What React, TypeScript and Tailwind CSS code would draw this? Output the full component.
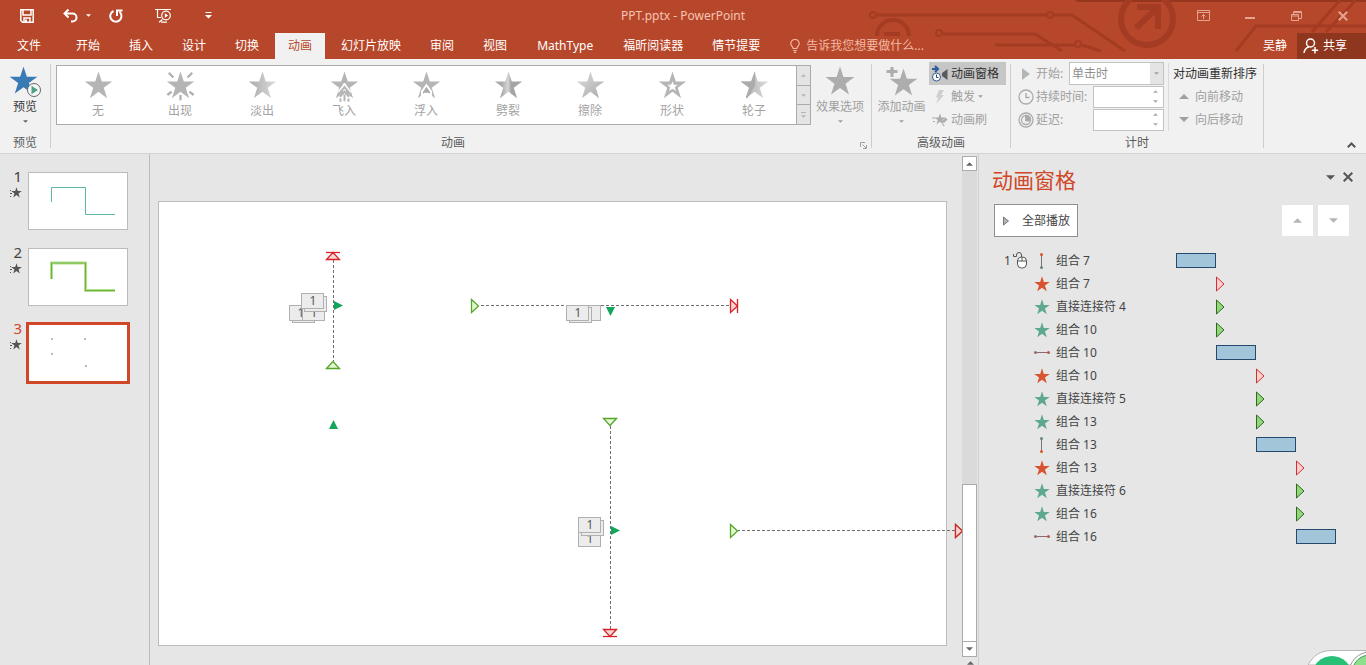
import React from "react"
import clsx from "clsx"

const STAR =
	"50,2 61.5,37 98,37 68.5,59 80,95 50,73 20,95 31.5,59 2,37 38.5,37"

const tabs = [
	"开始",
	"插入",
	"设计",
	"切换",
	"动画",
	"幻灯片放映",
	"审阅",
	"视图",
	"MathType",
	"福昕阅读器",
	"情节提要",
]

const effects = [
	{ name: "无", kind: "none" },
	{ name: "出现", kind: "appear" },
	{ name: "淡出", kind: "fade" },
	{ name: "飞入", kind: "fly" },
	{ name: "浮入", kind: "float" },
	{ name: "劈裂", kind: "split" },
	{ name: "擦除", kind: "wipe" },
	{ name: "形状", kind: "shape" },
	{ name: "轮子", kind: "wheel" },
]

type RowProps = {
	icon: "up" | "down" | "line" | "exit" | "enter"
	name: string
	start: number
}

const rows: RowProps[] = [
	{ icon: "up", name: "组合 7", start: 0 },
	{ icon: "exit", name: "组合 7", start: 40 },
	{ icon: "enter", name: "直接连接符 4", start: 40 },
	{ icon: "enter", name: "组合 10", start: 40 },
	{ icon: "line", name: "组合 10", start: 40 },
	{ icon: "exit", name: "组合 10", start: 80 },
	{ icon: "enter", name: "直接连接符 5", start: 80 },
	{ icon: "enter", name: "组合 13", start: 80 },
	{ icon: "down", name: "组合 13", start: 80 },
	{ icon: "exit", name: "组合 13", start: 120 },
	{ icon: "enter", name: "直接连接符 6", start: 120 },
	{ icon: "enter", name: "组合 16", start: 120 },
	{ icon: "line", name: "组合 16", start: 120 },
]

function Star({ className }: { className?: string }) {
	return (
		<svg viewBox="0 0 100 100" className={className} fill="currentColor">
			<polygon points={STAR} />
		</svg>
	)
}

function Caret({ up, className }: { up?: boolean; className?: string }) {
	return (
		<svg viewBox="0 0 10 5" className={className} fill="currentColor">
			<path d={up ? "M0 5L5 0L10 5Z" : "M0 0L5 5L10 0Z"} />
		</svg>
	)
}

function Separator() {
	return <div className="my-[5px] w-px shrink-0 bg-[#cdcdcd]" />
}

function Circuit() {
	return (
		<svg
			viewBox="0 0 526 59"
			className="pointer-events-none absolute right-0 top-0 h-[59px] w-[526px]"
			fill="none"
			stroke="#a33c22"
			strokeWidth="3"
		>
			<path d="M235 0H526V2H238Z" fill="#96361d" stroke="none" />
			<circle cx="33" cy="15" r="3" strokeWidth="2" />
			<path d="M37 15H206M214 15H232L285 51" />
			<circle cx="210" cy="15" r="3" strokeWidth="2" />
			<path d="M37 36A16 16 0 0 1 69 36" strokeWidth="4" />
			<path d="M44 34H60" strokeWidth="4" />
			<circle cx="99" cy="33" r="3" strokeWidth="2" />
			<path d="M103 34H195L222 51M155 45H234M242 45L261 51" />
			<circle cx="238" cy="44" r="3" strokeWidth="2" />
			<circle cx="307" cy="19" r="26" strokeWidth="6" />
			<path d="M296 28L317 8M297 7H318V29" strokeWidth="6" />
			<path d="M396 51L416 26H526M472 32L500 0M486 32L516 0" />
		</svg>
	)
}

function TitleBar() {
	return (
		<div className="relative flex h-[31px] items-center">
			<div className="flex items-center text-white">
				<button aria-label="保存" className="ml-5">
					<svg viewBox="0 0 14 14" className="size-[14px]" fill="none" stroke="currentColor" strokeWidth="1.5">
						<path d="M.8.8H13.2V13.2H2.5L.8 11.5ZM3 1V6H11V1M4 13V9H10V13" />
						<path d="M5 10.5H7V13H5Z" fill="currentColor" stroke="none" />
					</svg>
				</button>
				<button aria-label="撤消" className="ml-[29px]">
					<svg viewBox="0 0 15 14" className="h-[14px] w-[15px]" fill="none" stroke="currentColor" strokeWidth="2">
						<path d="M1.5 4.5H9.5A4 4 0 0 1 9.5 12.5H8M5.5.5L1.5 4.5L5.5 8.5" />
					</svg>
				</button>
				<button aria-label="撤消列表" className="ml-2">
					<Caret className="h-[3px] w-[5px]" />
				</button>
				<button aria-label="重复" className="ml-[18px]">
					<svg viewBox="0 0 14 14" className="size-[14px]" fill="none" stroke="currentColor" strokeWidth="2">
						<path d="M4.5 2A5.600 5.600 0 1 0 10.500 2.800M8 7V1.500H13.500" />
					</svg>
				</button>
				<button aria-label="从头开始" className="ml-8">
					<svg viewBox="0 0 17 15" className="h-[15px] w-[17px]" fill="none" stroke="currentColor" strokeWidth="1.2">
						<path d="M0 1.5H16M2.5 2V9.5H6M4 14.2L7.5 11.5M6 14.2H12" />
						<circle cx="11" cy="7.5" r="4.3" />
						<path d="M9.8 5.2L13.2 7.5L9.8 9.8Z" fill="currentColor" stroke="none" />
					</svg>
				</button>
				<button aria-label="自定义快速访问工具栏" className="ml-[33px]">
					<svg viewBox="0 0 7 7" className="size-[7px]" fill="currentColor">
						<path d="M.5 0H6.5V1H.5ZM0 3H7L3.5 6.5Z" />
					</svg>
				</button>
			</div>
			<h1 className="absolute inset-x-0 text-center text-xs text-[#f6c4b4]">
				PPT.pptx - PowerPoint
			</h1>
			<div className="ml-auto flex items-center text-[#e5a491]">
				<button aria-label="功能区显示选项" className="mr-[35px]">
					<svg viewBox="0 0 13 11" className="h-[11px] w-[13px]" fill="none" stroke="currentColor">
						<path d="M.5.5H12.5V10.5H.5ZM1 2.5H12M6.5 9V4.5M4.5 6.5L6.5 4.5L8.5 6.5" />
					</svg>
				</button>
				<button aria-label="最小化" className="mr-9">
					<svg viewBox="0 0 10 10" className="size-[10px]" fill="currentColor">
						<path d="M0 6H10V8H0Z" />
					</svg>
				</button>
				<button aria-label="还原" className="mr-9">
					<svg viewBox="0 0 11 10" className="h-[10px] w-[11px]" fill="none" stroke="currentColor">
						<path d="M.5 3.5H7.5V9.5H.5ZM1 5H7M2.5 3V.5H10.5V7.5H8M3 1.5H10" />
					</svg>
				</button>
				<button aria-label="关闭" className="mr-[18px]">
					<svg viewBox="0 0 10 10" className="size-[10px]" fill="none" stroke="currentColor" strokeWidth="2">
						<path d="M.8.8L9.2 9.2M9.2.8L.8 9.2" />
					</svg>
				</button>
			</div>
		</div>
	)
}

function TabBar() {
	return (
		<nav className="relative flex h-7 items-stretch gap-[3px] pt-0.5 text-white">
			<button className="w-[60px] shrink-0 pr-0.5 leading-6">文件</button>
			{tabs.map((tab) => (
				<button
					key={tab}
					className={clsx(
						"shrink-0 whitespace-nowrap",
						tab === "MathType" ? "px-[14px]" : "px-[13px]",
						tab === "动画" && "bg-[#f1f1f1] text-[#b7472a]"
					)}
				>
					{tab}
				</button>
			))}
			<label htmlFor="tell-me" className="ml-[14px] flex items-center">
				<svg viewBox="0 0 10 14" className="h-[14px] w-[10px] text-[#f3b9a7]" fill="none" stroke="currentColor" strokeWidth="1.2">
					<path d="M3.2 9.5C3 7.5.8 7 .8 4.6A4.2 4.2 0 0 1 9.2 4.6C9.2 7 7 7.5 6.8 9.5ZM3.2 11.5H6.8M3.8 13.3H6.2" />
				</svg>
			</label>
			<input
				id="tell-me"
				aria-label="操作说明搜索"
				className="ml-[3px] w-32 bg-transparent outline-none placeholder:text-[#f3b9a7]"
				placeholder="告诉我您想要做什么..."
			/>
			<div className="ml-auto flex">
				<button className="px-[10px]">吴静</button>
				<button className="flex items-center gap-1 bg-[#8f371e] pl-1.5 pr-[19px]">
					<svg viewBox="0 0 16 16" className="size-4" fill="none" stroke="currentColor" strokeWidth="1.5">
						<circle cx="7.5" cy="5" r="4" />
						<path d="M1 15C1.5 11.5 3.5 9.5 6 9M12 9V15.5M8.8 12.2H15.2" />
					</svg>
					共享
				</button>
			</div>
		</nav>
	)
}

function EffectIcon({ kind }: { kind: string }) {
	return (
		<svg viewBox="0 0 100 112" className="h-8 w-[29px]" fill="#b5b5b5">
			<defs>
				<linearGradient id="fade">
					<stop offset="0" stopColor="#aaa" />
					<stop offset="1" stopColor="#dcdcdc" />
				</linearGradient>
				<linearGradient id="split">
					<stop offset=".25" stopColor="#aaa" />
					<stop offset=".48" stopColor="#d6d6d6" />
					<stop offset=".6" stopColor="#a4a4a4" />
				</linearGradient>
				<linearGradient id="wipe" x1="0" y1="0" x2="1" y2="1">
					<stop offset="0" stopColor="#dedede" />
					<stop offset="1" stopColor="#a9a9a9" />
				</linearGradient>
			</defs>
			<polygon
				points={STAR}
				fill={
					kind === "fade" || kind === "wheel"
						? "url(#fade)"
						: kind === "split"
						? "url(#split)"
						: kind === "wipe"
						? "url(#wipe)"
						: undefined
				}
			/>
			{kind === "appear" && (
				<path
					d="M9 6L25 23M91 6L75 23M4 84L19 72M96 84L81 72M50 84V102"
					stroke="#b1b1b1"
					strokeWidth="8"
				/>
			)}
			{kind === "fly" && (
				<g fill="none">
					<path d="M50 44V104M30 76L50 50L70 76M28 104L50 78L72 104" stroke="#fff" strokeWidth="11" />
					<path d="M32 78L50 56L68 78M34 90L50 72L66 90M50 82V106M36 96V108M64 96V108" stroke="#b5b5b5" strokeWidth="7" />
				</g>
			)}
			{kind === "float" && (
				<path d="M50 50L66 72V90L57 80H43L34 90V72Z" fill="#ababab" stroke="#fff" strokeWidth="7" />
			)}
			{kind === "shape" && (
				<polygon points="50,36 55,48 68,48 58,57 62,70 50,62 38,70 42,57 32,48 45,48" fill="#fff" />
			)}
			{kind === "wheel" && <path d="M52 0V52L24 96L20 92L31 59L2 37H38Z" fill="#acacac" />}
		</svg>
	)
}

function Gallery() {
	return (
		<div className="mt-1.5 flex h-[60px] border border-[#ababab] bg-white">
			{effects.map((effect) => (
				<button
					key={effect.name}
					disabled
					className="flex w-[82px] flex-col items-center pt-[5px] text-[#a3a3a3]"
				>
					<EffectIcon kind={effect.kind} />
					<span className="leading-4">{effect.name}</span>
				</button>
			))}
			<div className="-my-px -mr-px ml-px flex w-[15px] flex-col divide-y divide-[#ababab] border border-[#ababab] bg-[#e4e4e4] text-[#b4b4b4]">
				<button aria-label="上一行" disabled className="flex flex-1 items-center justify-center">
					<Caret up className="h-[3px] w-[5px]" />
				</button>
				<button aria-label="下一行" disabled className="flex flex-1 items-center justify-center">
					<Caret className="h-[3px] w-[5px]" />
				</button>
				<button aria-label="其他" disabled className="flex flex-1 flex-col items-center justify-center gap-0.5">
					<span className="h-px w-[5px] bg-current" />
					<Caret className="h-[3px] w-[5px]" />
				</button>
			</div>
		</div>
	)
}

function GroupLabel({ children }: { children: React.ReactNode }) {
	return (
		<div className="mb-0.5 mt-auto text-center leading-4 text-[#5c5c5c]">{children}</div>
	)
}

function ClockIcon({ filled }: { filled?: boolean }) {
	return (
		<svg viewBox="0 0 16 16" className="size-4" fill="none" stroke="#ababab" strokeWidth="1.3">
			<circle cx="8" cy="8" r="7" />
			{filled && <circle cx="8" cy="8" r="4.5" />}
			{filled && <path d="M8 3.5A4.5 4.5 0 0 1 12.5 8.5H8Z" fill="#ababab" />}
			<path d="M8 4V8.5H11.5" />
		</svg>
	)
}

function Spinner({ id }: { id: string }) {
	return (
		<div className="ml-auto flex h-[22px] w-[71px] items-center border border-[#c3c3c3] bg-white pr-[5px]">
			<input id={id} disabled className="h-full w-0 flex-1 bg-transparent px-1" />
			<div className="flex flex-col gap-[7px] text-[#a8a8a8]">
				<Caret up className="h-[3px] w-[5px]" />
				<Caret className="h-[3px] w-[5px]" />
			</div>
		</div>
	)
}

function Ribbon() {
	return (
		<div className="flex h-[95px] shrink-0 border-b border-[#d2d2d2] bg-[#f1f1f1] text-[#a0a0a0]">
			<section className="flex w-[50px] shrink-0 flex-col">
				<button className="flex flex-col items-center pt-2 text-[#3b3b3b]">
					<svg viewBox="0 0 32 32" className="size-8">
						<g transform="translate(0 -1) scale(.29)">
							<polygon points={STAR} fill="#3b7bb5" />
						</g>
						<circle cx="25" cy="23" r="6.5" fill="#f8f8f8" stroke="#5e6b67" />
						<path d="M22.5 18.8L29 23L22.5 27.2Z" fill="#4fa084" />
					</svg>
					<span className="leading-4">预览</span>
					<Caret className="mt-[5px] h-[3px] w-[5px] text-[#666]" />
				</button>
				<GroupLabel>预览</GroupLabel>
			</section>
			<Separator />
			<section className="relative flex w-[820px] shrink-0 flex-col">
				<div className="flex pl-[5px] pr-0.5">
					<Gallery />
					<button disabled className="flex flex-1 flex-col items-center pt-2">
						<Star className="-mt-0.5 mb-0.5 size-8 p-px text-[#adadad]" />
						<span className="leading-4">效果选项</span>
						<Caret className="mt-[5px] h-[3px] w-[5px]" />
					</button>
				</div>
				<GroupLabel>
					<span className="pr-4">动画</span>
				</GroupLabel>
				<button aria-label="显示其他效果选项" className="absolute bottom-1 right-1">
					<svg viewBox="0 0 7 7" className="size-[7px]" fill="none" stroke="#a0a0a0">
						<path d="M.5 5V.5H5M2.5 2.5L6 6M6.5 3V6.5H3" />
					</svg>
				</button>
			</section>
			<Separator />
			<section className="flex w-[138px] shrink-0 flex-col">
				<div className="flex">
					<button disabled className="flex w-[57px] flex-col items-center pl-0.5 pt-2">
						<svg viewBox="0 0 32 32" className="size-8" fill="#adadad">
							<g transform="translate(3 1) scale(.29)">
								<polygon points={STAR} />
							</g>
							<path d="M4 -1.500H8V2.500H12V6.500H8V10.500H4V6.500H0V2.500H4Z" stroke="#f1f1f1" />
						</svg>
						<span className="whitespace-nowrap leading-4">添加动画</span>
						<Caret className="mt-[5px] h-[3px] w-[5px]" />
					</button>
					<div className="flex flex-col pt-[3px]">
						<button className="flex h-[23px] w-[77px] items-center gap-[3px] bg-[#c6c6c6] pl-[3px] text-[#2f2f2f]">
							<svg viewBox="0 0 16 18" className="h-[18px] w-4">
								<path d="M0 4H5M3 1L6 4L3 7" fill="none" stroke="#2b5c9b" strokeWidth="2" />
								<circle cx="4.500" cy="12" r="4" fill="#fff" stroke="#2b5c9b" />
								<path d="M4.500 9.500V12.500H6.500" fill="none" stroke="#444" />
								<path d="M15.500 4V15L10 11V8Z" fill="#5a5a5a" />
							</svg>
							动画窗格
						</button>
						<button disabled className="flex h-[23px] items-center gap-[3px] pl-[3px]">
							<svg viewBox="0 0 16 16" className="size-4" fill="#cfcfcf">
								<path d="M7 1H12L9 6H12L4 15L6.500 8.500H4Z" />
							</svg>
							触发
							<Caret className="h-[3px] w-[5px]" />
						</button>
						<button disabled className="flex h-[23px] items-center gap-[3px] pl-[3px]">
							<svg viewBox="0 0 16 16" className="size-4" fill="#adadad">
								<g transform="translate(2 1) scale(.12)">
									<polygon points={STAR} />
								</g>
								<path d="M0 6H3M1 9.500H3" stroke="#adadad" />
								<path d="M10 9L13.500 5.500L15.500 7.500L12 11ZM10 11L13 14L11 14Z" />
							</svg>
							动画刷
						</button>
					</div>
				</div>
				<GroupLabel>高级动画</GroupLabel>
			</section>
			<Separator />
			<section className="flex w-[252px] shrink-0 flex-col">
				<div className="flex">
					<div className="flex w-[153px] flex-col pl-[7px] pt-[3px]">
						<div className="flex h-[23px] items-center">
							<svg viewBox="0 0 16 16" className="size-4" fill="#b5b5b5">
								<path d="M4 2L12 8L4 14Z" />
							</svg>
							<label htmlFor="start" className="ml-0.5">
								开始:
							</label>
							<div className="relative ml-auto">
								<select
									id="start"
									disabled
									className="block h-[23px] w-[95px] appearance-none border border-[#c3c3c3] bg-white pl-0.5 text-[#8f8f8f] opacity-100"
								>
									<option>单击时</option>
								</select>
								<span className="pointer-events-none absolute inset-y-px right-px flex w-[13px] items-center justify-center bg-[#e4e4e4]">
									<Caret className="h-[3px] w-[5px]" />
								</span>
							</div>
						</div>
						<div className="flex h-[23px] items-center">
							<ClockIcon />
							<label htmlFor="duration" className="ml-0.5 whitespace-nowrap">
								持续时间:
							</label>
							<Spinner id="duration" />
						</div>
						<div className="flex h-[23px] items-center">
							<ClockIcon filled />
							<label htmlFor="delay" className="ml-0.5">
								延迟:
							</label>
							<Spinner id="delay" />
						</div>
					</div>
					<div className="ml-1 mt-1 w-px bg-[#dadada]" />
					<div className="flex flex-col pl-1 pt-[3px]">
						<div className="flex h-[23px] items-center whitespace-nowrap text-[#2f2f2f]">
							对动画重新排序
						</div>
						<button disabled className="flex h-[23px] items-center gap-1.5 pl-1.5">
							<Caret up className="h-[5px] w-[10px]" />
							向前移动
						</button>
						<button disabled className="flex h-[23px] items-center gap-1.5 pl-1.5">
							<Caret className="h-[5px] w-[10px]" />
							向后移动
						</button>
					</div>
				</div>
				<GroupLabel>计时</GroupLabel>
			</section>
			<Separator />
			<button aria-label="折叠功能区" className="ml-auto mr-[10px] self-end pb-[5px]">
				<svg viewBox="0 0 9 6" className="h-1.5 w-[9px]" fill="none" stroke="#555" strokeWidth="2">
					<path d="M.8 5.2L4.500 1.500L8.200 5.200" />
				</svg>
			</button>
		</div>
	)
}

function Thumbnails() {
	return (
		<aside className="w-[150px] shrink-0 border-r border-[#bcbcbc] pt-[18px]">
			<ol className="flex flex-col gap-[18px]">
				{[1, 2, 3].map((n) => (
					<li key={n} className="flex">
						<div
							className={clsx(
								"-mt-[7px] flex w-7 flex-col items-end pr-1.5 text-[15px] leading-[22px]",
								n === 3 ? "text-[#d04727]" : "text-[#444]"
							)}
						>
							{n}
							<svg viewBox="0 0 12 12" className="size-[12px] text-[#555]" fill="currentColor">
								<g transform="translate(1 0) scale(.11)">
									<polygon points={STAR} />
								</g>
								<path d="M0 3H1V4H0ZM0 6H2V7H0ZM0 9H1V10H0Z" />
							</svg>
						</div>
						<button
							aria-label={`幻灯片 ${n}`}
							className={clsx(
								"h-[58px] w-[100px] bg-white",
								n === 3
									? "outline-[3px] -outline-offset-1 outline-[#d04727]"
									: "border border-[#bcbcbc]"
							)}
						>
							<svg
								viewBox={n === 3 ? "0 0 100 58" : "1 1 98 56"}
								className="block h-full w-full"
								fill="none"
							>
								{n === 1 && <path d="M23.500 30V15.500H57.500V42.500H87" stroke="#5bb8a4" />}
								{n === 2 && (
									<>
										<path d="M23.500 31V15H57.500V42.500H87" stroke="#b4e08e" strokeWidth="3" />
										<path d="M23.500 31V15H57.500V42.500H87" stroke="#6cb33e" />
									</>
								)}
								{n === 3 && (
									<path d="M23 15H25M23 30H25M56 15H58M57 42H59" stroke="#777" />
								)}
							</svg>
						</button>
					</li>
				))}
			</ol>
		</aside>
	)
}

type TagProps = { x: number; y: number; label?: boolean }

// animation order tag drawn beside the object it belongs to
function Tag({ x, y, label }: TagProps) {
	return (
		<g transform={`translate(${x} ${y})`}>
			<rect x=".5" y=".5" width="22" height="15" fill="#ececec" stroke="#b0b0b0" />
			{label && (
				<text x="12" y="12" textAnchor="middle" fontSize="12" fill="#555">
					1
				</text>
			)}
		</g>
	)
}

type MotionEndProps = { x: number; y: number; rotate: number; stop?: boolean }

function MotionEnd({ x, y, rotate, stop }: MotionEndProps) {
	return (
		<g
			transform={`translate(${x} ${y}) rotate(${rotate})`}
			fill={stop ? "#fbd5d1" : "#e4fbd0"}
			stroke={stop ? "#d8232a" : "#57a52f"}
			strokeWidth="1.3"
		>
			<path d="M-3.500 -6.500L3.500 0L-3.500 6.500Z" />
			{stop && <path d="M3.500 -7V7" />}
		</g>
	)
}

function Slide() {
	return (
		<svg viewBox="0 0 789 445" className="block aspect-[789/445] w-full overflow-visible">
			<rect x=".5" y=".5" width="788" height="444" fill="#fff" stroke="#bcbcbc" />
			<g stroke="#6f6f6f" strokeDasharray="3 2">
				<path d="M175.500 59V160M323 104.500H573M452.500 225V428M579 329.500H798" />
			</g>
			<MotionEnd x={175} y={55} rotate={-90} stop />
			<MotionEnd x={175} y={164} rotate={-90} />
			<MotionEnd x={317} y={105} rotate={0} />
			<MotionEnd x={576} y={105} rotate={0} stop />
			<MotionEnd x={452} y={221} rotate={90} />
			<MotionEnd x={452} y={432} rotate={90} stop />
			<MotionEnd x={576} y={330} rotate={0} />
			<MotionEnd x={801} y={330} rotate={0} />
			<path d="M797.500 323.500L804.500 330L797.500 336.500Z" fill="#fbd5d1" stroke="#d8232a" strokeWidth="1.3" />
			<g fill="#12a55c">
				<path d="M176 100L185 104.500L176 109Z" />
				<path d="M171 228L175.500 219L180 228Z" />
				<path d="M448 106L452.500 115L457 106Z" />
				<path d="M453 325L462 329.500L453 334Z" />
			</g>
			<Tag x={134} y={106} />
			<Tag x={131} y={104} label />
			<Tag x={144} y={104} label />
			<Tag x={146} y={95} />
			<Tag x={143} y={92} label />
			<Tag x={420} y={104} />
			<Tag x={411} y={106} />
			<Tag x={408} y={104} label />
			<Tag x={420} y={330} label />
			<Tag x={423} y={319} />
			<Tag x={420} y={316} label />
		</svg>
	)
}

function ScrollBar() {
	return (
		<div className="relative z-10 flex w-4 shrink-0 flex-col bg-[#e6e6e6] pt-0.5">
			<button aria-label="向上滚动" className="mr-px flex h-[15px] items-center justify-center border border-[#ababab] bg-white text-[#666]">
				<Caret up className="h-1 w-[7px]" />
			</button>
			<div className="mr-px flex flex-1 flex-col bg-[#dadada]">
				<div className="flex-[2]" />
				<div className="flex-1 border border-[#ababab] bg-white" />
			</div>
			<button aria-label="向下滚动" className="mr-px flex h-[15px] items-center justify-center border border-t-0 border-[#ababab] bg-white text-[#666]">
				<Caret className="h-1 w-[7px]" />
			</button>
			<button aria-label="上一张幻灯片" className="flex h-2 items-end justify-center text-[#666]">
				<Caret up className="h-1 w-[7px]" />
			</button>
		</div>
	)
}

function RowIcon({ icon }: { icon: RowProps["icon"] }) {
	if (icon === "exit") return <Star className="size-4 text-[#d9532f]" />
	if (icon === "enter") return <Star className="size-4 text-[#5fa890]" />
	if (icon === "line")
		return (
			<svg viewBox="0 0 16 16" className="size-4">
				<path d="M1 7.500H15" stroke="#8a6a6a" />
				<circle cx="1.500" cy="7.500" r="1.500" fill="#9a6a6a" />
				<circle cx="14.500" cy="7.500" r="1.500" fill="#b05a55" />
			</svg>
		)
	return (
		<svg viewBox="0 0 16 16" className="size-4">
			<path d="M7.500 2V14" stroke="#777" />
			<circle cx="7.500" cy="1.500" r="1.500" fill={icon === "up" ? "#d9532f" : "#6b8278"} />
			<circle cx="7.500" cy="14.500" r="1.500" fill={icon === "up" ? "#6b8278" : "#d9532f"} />
		</svg>
	)
}

function TimelineMark({ icon }: { icon: RowProps["icon"] }) {
	if (icon === "exit" || icon === "enter") {
		const exit = icon === "exit"
		return (
			<svg
				viewBox="0 0 9 16"
				className="block h-4 w-[9px]"
				fill={exit ? "#fbd0cb" : "#93d67c"}
				stroke={exit ? "#cf2f33" : "#2c6b1e"}
			>
				<path d="M.5 1L8 8L.5 15Z" />
			</svg>
		)
	}
	return <div className="h-[15px] w-10 border border-[#244a70] bg-[#a2c5da]" />
}

function AnimationPane() {
	return (
		<aside className="w-[388px] shrink-0 border-l border-[#d0d0d0] pl-[13px] text-[#444]">
			<div className="flex items-start pt-3">
				<h2 className="text-[21px] leading-7 text-[#d04727]">动画窗格</h2>
				<button aria-label="任务窗格选项" className="ml-auto mt-[9px]">
					<Caret className="h-[5px] w-[9px] text-[#555]" />
				</button>
				<button aria-label="关闭窗格" className="ml-2 mr-[13px] mt-1.5">
					<svg viewBox="0 0 10 10" className="size-[10px]" fill="none" stroke="#555" strokeWidth="2">
						<path d="M.7.7L9.300 9.300M9.300.7L.7 9.300" />
					</svg>
				</button>
			</div>
			<div className="mt-[10px] flex items-center pl-0.5">
				<button className="flex h-[33px] w-[84px] items-center border border-[#8f8f8f] bg-white pl-2">
					<svg viewBox="0 0 6 10" className="h-[10px] w-1.5" fill="#b5b5b5" stroke="#777">
						<path d="M.5 1L5.500 5L.5 9Z" />
					</svg>
					<span className="ml-[13px]">全部播放</span>
				</button>
				<button aria-label="上移" disabled className="ml-auto flex h-[31px] w-[31px] items-center justify-center bg-white text-[#b5b5b5]">
					<Caret up className="h-[5px] w-[9px]" />
				</button>
				<button aria-label="下移" disabled className="ml-[5px] mr-[17px] flex h-[31px] w-[31px] items-center justify-center bg-white text-[#b5b5b5]">
					<Caret className="h-[5px] w-[9px]" />
				</button>
			</div>
			<ol className="mt-3">
				{rows.map((row, index) => (
					<li key={index} className="flex h-[23px] items-center">
						<div className="flex w-[42px] items-center pl-3">
							{index === 0 && (
								<>
									<span className="w-2">1</span>
									<svg viewBox="0 0 16 17" className="h-[17px] w-4" fill="#fff" stroke="#555">
										<path d="M9.500 5V3A2.500 2.500 0 0 0 4.500 3V4.500H1.500V2" fill="none" />
										<rect x="5.500" y="5" width="9" height="11" rx="4" />
										<path d="M5.500 9H14.500M10 5V9" />
									</svg>
								</>
							)}
						</div>
						<RowIcon icon={row.icon} />
						<span className="ml-[6px] w-[120px]">{row.name}</span>
						<div style={{ marginLeft: row.start }}>
							<TimelineMark icon={row.icon} />
						</div>
					</li>
				))}
			</ol>
		</aside>
	)
}

function FloatingBadge() {
	return (
		<svg viewBox="0 0 58 15" className="fixed bottom-0 right-0 h-[15px] w-[58px]">
			<path d="M0 15C5 6 12 .5 24 .5H58V15Z" fill="#fff" stroke="#b5b5b5" />
			<circle cx="24" cy="26" r="20" fill="#28c076" />
			<circle cx="62" cy="23" r="21" fill="#fff" stroke="#8f9a94" />
			<circle cx="62" cy="23" r="18" fill="#8fe08c" stroke="#3f9a5c" />
		</svg>
	)
}

function App() {
	return (
		<div className="flex h-screen flex-col overflow-hidden bg-[#e6e6e6] font-['Noto_Sans','Noto_Sans_CJK_SC',sans-serif] text-xs">
			<header className="relative shrink-0 bg-[#b7472a]">
				<Circuit />
				<TitleBar />
				<TabBar />
			</header>
			<Ribbon />
			<div className="flex min-h-0 flex-1">
				<Thumbnails />
				<main className="min-w-0 flex-1 pl-2 pr-[15px] pt-[47px]">
					<Slide />
				</main>
				<ScrollBar />
				<AnimationPane />
			</div>
			<FloatingBadge />
		</div>
	)
}

export default App
